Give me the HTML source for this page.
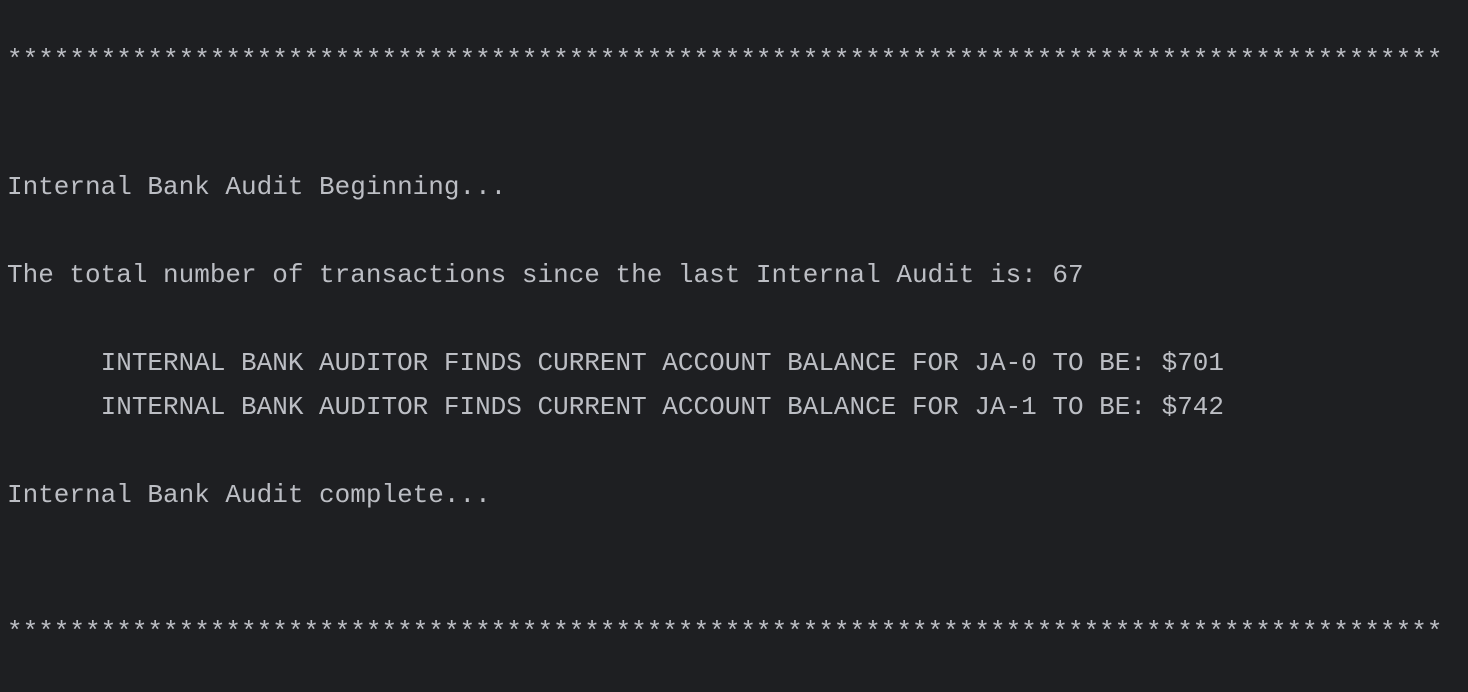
<!DOCTYPE html>
<html><head><meta charset="utf-8"><style>
html,body{margin:0;padding:0;background:#1e1f22;width:1468px;height:692px;overflow:hidden}
pre{margin:0;padding:33px 0 0 7px;font-family:"Liberation Mono",monospace;font-size:26px;line-height:44px;color:#bcbec4;white-space:pre}
.s{position:relative;top:5px}
</style></head><body><pre><span class="s">********************************************************************************************</span>


Internal Bank Audit Beginning...

The total number of transactions since the last Internal Audit is: 67

      INTERNAL BANK AUDITOR FINDS CURRENT ACCOUNT BALANCE FOR JA-0 TO BE: $701
      INTERNAL BANK AUDITOR FINDS CURRENT ACCOUNT BALANCE FOR JA-1 TO BE: $742

Internal Bank Audit complete...


<span class="s">********************************************************************************************</span>
</pre></body></html>
